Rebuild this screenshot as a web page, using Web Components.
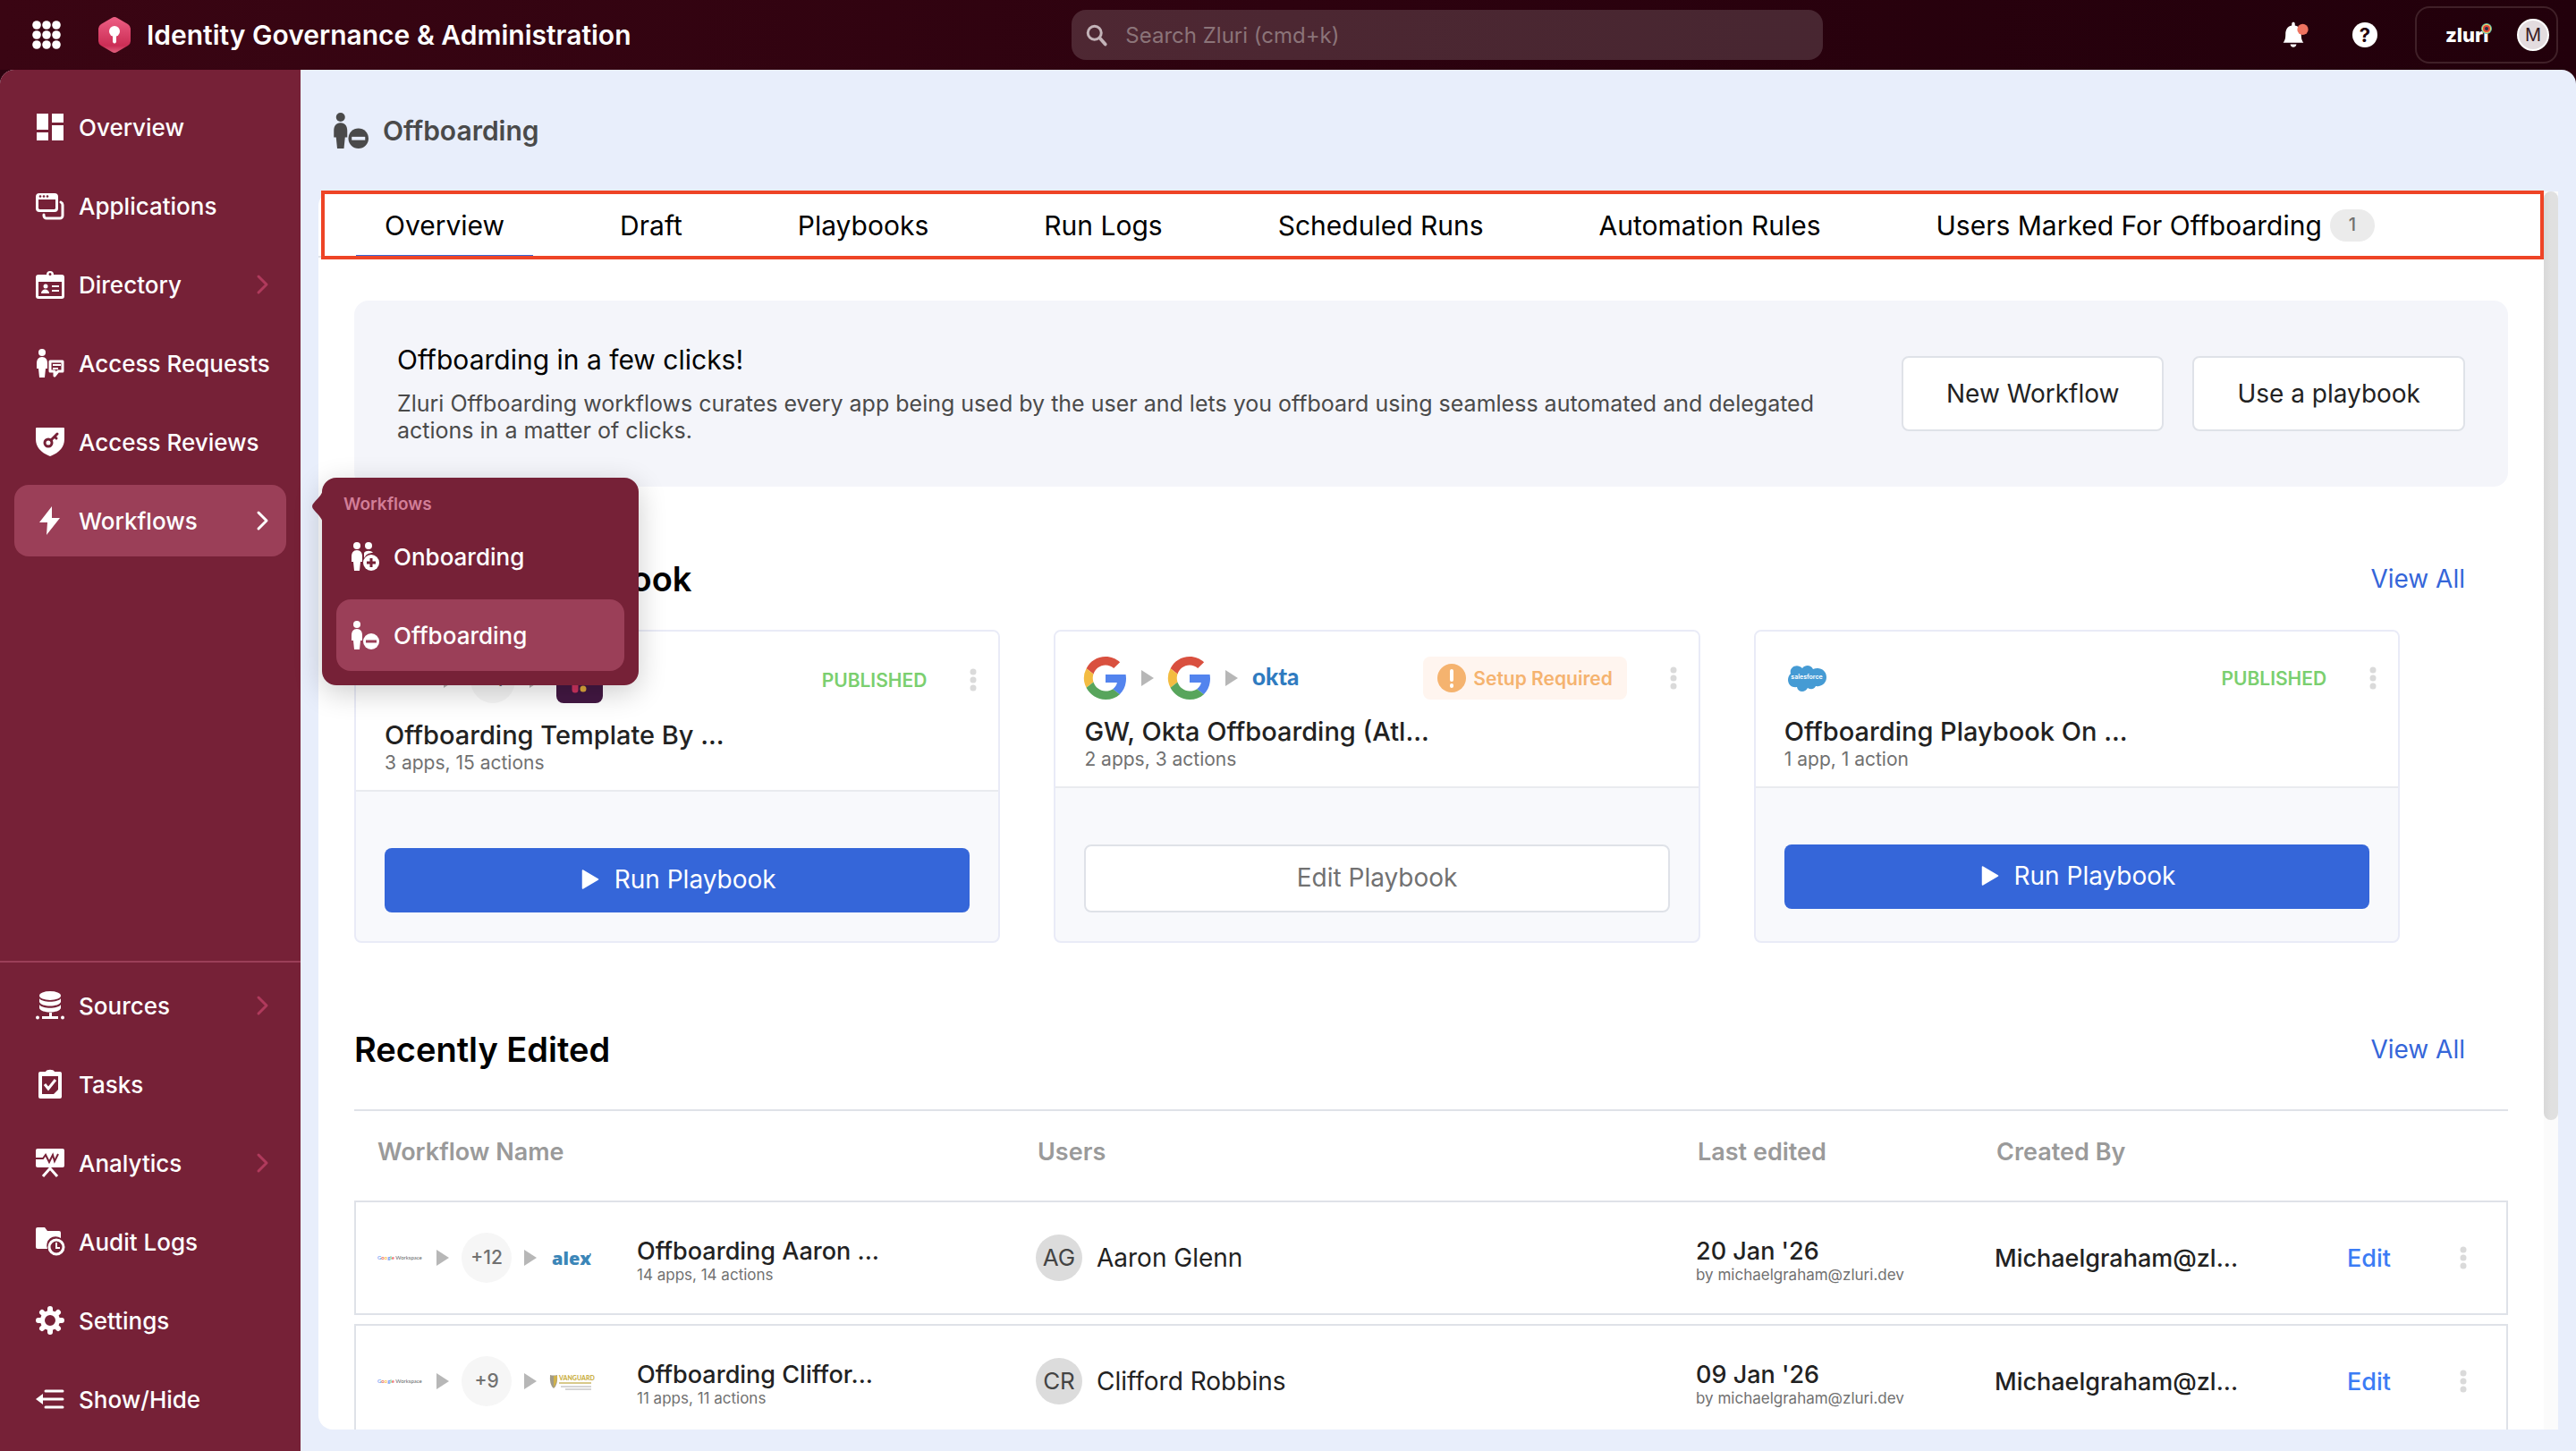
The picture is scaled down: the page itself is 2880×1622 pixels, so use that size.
<!DOCTYPE html>
<html lang="en">
<head>
<meta charset="utf-8">
<title>Offboarding</title>
<style>
	html, body {
		margin: 0;
		height: 100%;
	}
	body {
		font-family: Inter, "Noto Sans", sans-serif;
		font-size: 26px;
		color: #222;
		--wine: #762137;
		--wine-light: #9b3f58;
		--blue: #3566d9;
		--line: #dfe2e8;
		--page: #e8eefb;
	}
</style>
</head>
<body>
<app-shell>
	<app-header slot="header">Identity Governance &amp; Administration</app-header>
	<side-nav slot="nav">
		<nav-item icon="overview">Overview</nav-item>
		<nav-item icon="applications">Applications</nav-item>
		<nav-item icon="directory" more>Directory</nav-item>
		<nav-item icon="requests">Access Requests</nav-item>
		<nav-item icon="reviews">Access Reviews</nav-item>
		<nav-item icon="bolt" more active>Workflows
			<nav-flyout slot="flyout" heading="Workflows">
				<nav-item icon="onboarding" compact>Onboarding</nav-item>
				<nav-item icon="offboarding" compact active>Offboarding</nav-item>
			</nav-flyout>
		</nav-item>
		<nav-item slot="bottom" icon="sources" more>Sources</nav-item>
		<nav-item slot="bottom" icon="tasks">Tasks</nav-item>
		<nav-item slot="bottom" icon="analytics" more>Analytics</nav-item>
		<nav-item slot="bottom" icon="audit">Audit Logs</nav-item>
		<nav-item slot="bottom" icon="settings">Settings</nav-item>
		<nav-item slot="bottom" icon="collapse">Show/Hide</nav-item>
	</side-nav>

	<page-title icon="offboarding">Offboarding</page-title>
	<content-panel>
		<tab-bar slot="tabs">
			<tab-link active>Overview</tab-link>
			<tab-link>Draft</tab-link>
			<tab-link>Playbooks</tab-link>
			<tab-link>Run Logs</tab-link>
			<tab-link>Scheduled Runs</tab-link>
			<tab-link>Automation Rules</tab-link>
			<tab-link count="1">Users Marked For Offboarding</tab-link>
		</tab-bar>
		<promo-banner heading="Offboarding in a few clicks!">
			Zluri Offboarding workflows curates every app being used by the user and lets you offboard using seamless automated and delegated actions in a matter of clicks.
			<outline-button slot="actions">New Workflow</outline-button>
			<outline-button slot="actions">Use a playbook</outline-button>
		</promo-banner>
		<section-block heading="Suggested Playbook">
			<card-grid>
				<playbook-card status="PUBLISHED" heading="Offboarding Template By ..." meta="3 apps, 15 actions">
					<app-flow slot="flow" apps="none,+1,slack" large></app-flow>
				</playbook-card>
				<playbook-card status="Setup Required" heading="GW, Okta Offboarding (Atl..." meta="2 apps, 3 actions">
					<app-flow slot="flow" apps="google,google,okta"></app-flow>
				</playbook-card>
				<playbook-card status="PUBLISHED" heading="Offboarding Playbook On ..." meta="1 app, 1 action">
					<app-flow slot="flow" apps="salesforce"></app-flow>
				</playbook-card>
			</card-grid>
		</section-block>
		<section-block heading="Recently Edited" ruled>
			<workflow-table></workflow-table>
		</section-block>
	</content-panel>
</app-shell>

<script>
function define (name, html, setup) {
	const template = document.createElement('template');
	template.innerHTML = `<style>
		*, ::before, ::after { box-sizing: border-box; }
		a { color: inherit; text-decoration: none; }
		button { font: inherit; cursor: pointer; margin: 0; }
		svg { display: block; }
		:host { display: block; box-sizing: border-box; }
	</style>` + html;
	window.customElements.define(name, class extends HTMLElement {
		constructor () {
			super();
			this._shadowRoot = this.attachShadow({ mode : 'open' });
			this._shadowRoot.appendChild(template.content.cloneNode(true));
		}
		connectedCallback () {
			if (setup) setup(this, this._shadowRoot);
		}
	});
}

const person = '<circle cx="7" cy="4" r="4"/><path d="M7 9c4 0 6 3 6 7v6h-2l-1 10H4L3 22H1v-6c0-4 2-7 6-7z"/>';

// all drawn on a 32 x 32 box in currentColor
const icons = {
	overview: '<path d="M1 1h13v18H1zM18 1h13v10H18zM1 22h13v9H1zM18 14h13v17H18z"/>',
	applications: '<path d="M4 2h17a4 4 0 0 1 4 4v13a4 4 0 0 1-4 4H4a4 4 0 0 1-4-4V6a4 4 0 0 1 4-4zm-1 7v10l1 1h17l1-1V9z" fill-rule="evenodd"/><g fill="#762137"><circle cx="5" cy="5.500" r="1.300"/><circle cx="9" cy="5.500" r="1.300"/><circle cx="13" cy="5.500" r="1.300"/></g><path d="M28 12q2 1 2 3v12a3 3 0 0 1-3 3H12a3 3 0 0 1-3-3v-1" fill="none" stroke="currentColor" stroke-width="3" stroke-linecap="round"/>',
	directory: '<path d="M12 5a4 4 0 0 1 8 0h9a3 3 0 0 1 3 3v21a3 3 0 0 1-3 3H3a3 3 0 0 1-3-3V8a3 3 0 0 1 3-3zM3 13v16h26V13zM16 3a1.500 1.500 0 1 0 0 3 1.500 1.500 0 0 0 0-3z" fill-rule="evenodd"/><circle cx="11" cy="18" r="2.500"/><path d="M6 26c0-6 9-6 9 0zM18 17h8v2h-8zM18 22h8v2h-8z"/>',
	requests: person + '<path d="M16 14h14v11h-5l-4 5v-5h-5z" fill="none" stroke="currentColor" stroke-width="3" stroke-linejoin="round"/><path d="M19 17h9v2h-9zM19 21h6v2h-6z"/>',
	reviews: '<path d="M1 0h30a1 1 0 0 1 1 1v12c0 8-5 15-16 19C5 28 0 21 0 13V1a1 1 0 0 1 1-1z"/><g fill="none" stroke="#762137" stroke-width="3" stroke-linecap="round"><circle cx="14" cy="17" r="4"/><path d="M17 14l7-7M21 10l2 2"/></g>',
	bolt: '<path d="M18 0L4 18h9l-1 14 15-19h-9z"/>',
	sources: '<ellipse cx="16" cy="5" rx="12" ry="5"/><path d="M4 8c3 5 21 5 24 0v4c-2 6-22 6-24 0zM4 15c3 5 21 5 24 0v4c-2 6-22 6-24 0zM15 24h3v4h7v3H7v-3h8z"/><circle cx="2" cy="29.500" r="2"/><circle cx="30" cy="29.500" r="2"/>',
	tasks: '<path d="M5 2h6c1-3 9-3 10 0h6a2 2 0 0 1 2 2v26a2 2 0 0 1-2 2H5a2 2 0 0 1-2-2V4a2 2 0 0 1 2-2zm2 5v20h13l5-5V7z" fill-rule="evenodd"/><path d="M10 16l4 5 8-10" fill="none" stroke="currentColor" stroke-width="3"/>',
	analytics: '<path d="M2 0h28a2 2 0 0 1 2 2v17a2 2 0 0 1-2 2H2a2 2 0 0 1-2-2V2a2 2 0 0 1 2-2z"/><path d="M0 11h8l3-4 4 8 4-8 2 7 4-8" fill="none" stroke="#762137" stroke-width="2"/><path d="M8 31l8-9 8 9" fill="none" stroke="currentColor" stroke-width="3"/>',
	audit: '<path d="M2 0h8l3 4h13a2 2 0 0 1 2 2v6a10 10 0 0 0-15 12H2a2 2 0 0 1-2-2V2a2 2 0 0 1 2-2z"/><circle cx="23" cy="22" r="8" fill="none" stroke="currentColor" stroke-width="3"/><path d="M23 17v6h4" fill="none" stroke="currentColor" stroke-width="2"/>',
	settings: '<path d="M16 5a11 11 0 1 0 0 22 11 11 0 0 0 0-22zm0 5a6 6 0 1 1 0 12 6 6 0 0 1 0-12z" fill-rule="evenodd"/><g stroke="currentColor" stroke-width="6" stroke-linecap="round" fill="none"><path d="M16 3v3M16 26v3M3 16h3M26 16h3M7 7l2 2M23 23l2 2M7 25l2-2M23 9l2-2"/></g>',
	collapse: '<path d="M0 16l8-6v12z"/><path d="M6 16h24M11 7h19M11 25h19" stroke="currentColor" stroke-width="3" stroke-linecap="round"/>',
	onboarding: '<circle cx="20" cy="4" r="4"/><path d="M15 12c2-3 8-3 10 0-5 0-8 2-10 6z"/>' + person + '<circle cx="23" cy="23" r="9"/><path d="M23 18v10M18 23h10" stroke="var(--icon-cut, #762137)" stroke-width="3"/>',
	offboarding: person + '<circle cx="23" cy="23" r="9"/><path d="M17 23h12" stroke="var(--icon-cut, #762137)" stroke-width="3"/>',
	chevron: '<path d="M11 7l9 9-9 9" fill="none" stroke="currentColor" stroke-width="3" stroke-linecap="round" stroke-linejoin="round"/>',
	search: '<circle cx="13" cy="13" r="10" fill="none" stroke="currentColor" stroke-width="4"/><path d="M21 21l8 9" stroke="currentColor" stroke-width="5" stroke-linecap="round"/>',
	kebab: '<circle cx="16" cy="7" r="3.500"/><circle cx="16" cy="16" r="3.500"/><circle cx="16" cy="25" r="3.500"/>',
	play: '<path d="M5 3q0-2 2-1l22 13q2 1 0 2L7 30q-2 1-2-1z"/>',
	warning: '<circle cx="16" cy="16" r="16"/><path d="M16 8v10M16 24v1" stroke="#fff" stroke-width="4" stroke-linecap="round"/>',
	apps: '<g>' + [5, 16, 27].map(y => [5, 16, 27].map(x => `<circle cx="${x}" cy="${y}" r="4.800"/>`).join('')).join('') + '</g>',
	bell: '<path d="M14 2c0-3 4-3 4 0v2c6 1 8 6 8 11 0 6 1 8 3 11H3c2-3 3-5 3-11 0-5 2-10 8-11zM12 28h8c-1 5-7 5-8 0z"/><circle cx="28" cy="9" r="7" fill="#ee7360"/>',
};

define('app-icon', `
	<style>
		:host { width: 32px; height: 32px; flex: none; }
		svg { width: 100%; height: 100%; overflow: visible; }
	</style>
	<svg viewBox="0 0 32 32" fill="currentColor" aria-hidden="true"></svg>
`, (el, root) => {
	root.querySelector('svg').innerHTML = icons[el.getAttribute('name')];
});

define('app-shell', `
	<style>
		:host {
			display: flex;
			flex-direction: column;
			height: 100vh;
			background: #2a020e;
		}
		.body {
			flex: 1;
			min-height: 0;
			display: flex;
			border-radius: 16px 16px 0 0;
			background: var(--page);
		}
		main {
			flex: 1;
			min-width: 0;
			display: flex;
			flex-direction: column;
			padding: 0 20px 24px;
		}
	</style>
	<slot name="header"></slot>
	<div class="body">
		<slot name="nav"></slot>
		<main><slot></slot></main>
	</div>
`);

define('app-header', `
	<style>
		:host {
			display: grid;
			grid-template-columns: 58fr 840px 41fr;
			align-items: center;
			height: 78px;
			padding: 0 20px 0 36px;
			background: linear-gradient(90deg, #3a0513, #2d020f 50%, #22000b);
			color: #fff;
		}
		.left, .right { display: flex; align-items: center; }
		h1 {
			margin: 0 0 0 18px;
			font-size: 30px;
			line-height: 36px;
			font-weight: 600;
		}
		.logo { margin-left: 42px; }
		.bare { padding: 0; border: 0; background: none; color: #fff; }
		.search {
			display: flex;
			align-items: center;
			gap: 20px;
			height: 56px;
			padding: 0 16px;
			border-radius: 16px;
			background: rgba(255, 255, 255, .15);
			color: #c3b3b8;
		}
		.search app-icon { width: 24px; height: 24px; }
		input {
			flex: 1;
			padding: 0;
			border: 0;
			outline: 0;
			background: none;
			font: inherit;
			font-size: 24px;
			color: #fff;
		}
		input::placeholder { color: #8b7479; opacity: 1; }
		.right { justify-content: flex-end; gap: 52px; }
		.bell { width: 28px; height: 28px; }
		.help {
			width: 28px;
			height: 28px;
			border-radius: 50%;
			background: #fff;
			color: #22000b;
			font-size: 22px;
			line-height: 28px;
			font-weight: 700;
		}
		.account {
			display: flex;
			align-items: center;
			justify-content: space-between;
			width: 160px;
			height: 64px;
			margin-left: -10px;
			padding: 0 8px 0 32px;
			border: 2px solid #402028;
			border-radius: 16px;
		}
		.brand { position: relative; font-size: 22px; font-weight: 800; }
		.brand svg { position: absolute; top: 0; right: -3px; }
		.avatar {
			width: 36px;
			height: 36px;
			border: 2px solid #fff;
			border-radius: 50%;
			background: #e3dcdf;
			color: #3a1c25;
			font-size: 20px;
			line-height: 32px;
			text-align: center;
		}
	</style>
	<div class="left">
		<button class="bare" aria-label="All products"><app-icon name="apps"></app-icon></button>
		<svg class="logo" width="36" height="40" viewBox="0 0 36 40" aria-hidden="true">
			<defs><linearGradient id="g" x2="0" y2="1"><stop stop-color="#ee5f85"/><stop offset=".8" stop-color="#cb2d55"/><stop offset="1" stop-color="#e0607e"/></linearGradient></defs>
			<path d="M15 1q3-2 6 0l12 7q3 2 3 5v14q0 3-3 5l-12 7q-3 2-6 0L3 32q-3-2-3-5V13q0-3 3-5z" fill="url(#g)"/>
			<circle cx="18" cy="16" r="6" fill="#fff"/><path d="M16 18h4v10q-2 3-4 0z" fill="#fff"/>
		</svg>
		<h1><slot></slot></h1>
	</div>
	<label class="search">
		<app-icon name="search"></app-icon>
		<input type="text" placeholder="Search Zluri (cmd+k)" aria-label="Search Zluri">
	</label>
	<div class="right">
		<button class="bare" aria-label="Notifications"><app-icon class="bell" name="bell"></app-icon></button>
		<button class="bare help">?</button>
		<div class="account">
			<span class="brand">zluri<svg width="12" height="12" viewBox="0 0 12 12" aria-hidden="true"><circle cx="6" cy="6" r="6" fill="#5fb8a8"/><circle cx="6" cy="6" r="5" fill="#f5dc6a"/><circle cx="6" cy="6" r="4" fill="#e0483a"/><circle cx="6" cy="6" r="2" fill="#22304a"/></svg></span>
			<span class="avatar">M</span>
		</div>
	</div>
`);

define('side-nav', `
	<style>
		:host {
			display: flex;
			flex-direction: column;
			justify-content: space-between;
			width: 336px;
			flex: none;
			background: var(--wine);
			border-top-left-radius: 16px;
			color: #fff;
			z-index: 1;
		}
		div { display: grid; gap: 8px; padding: 24px 16px; }
		.bottom { border-top: 2px solid var(--wine-light); padding: 8px 16px 18px; }
	</style>
	<div><slot></slot></div>
	<div class="bottom"><slot name="bottom"></slot></div>
`);

define('nav-item', `
	<style>
		:host { position: relative; }
		:host([active]) { --icon-cut: #9b3f58; }
		a {
			display: flex;
			align-items: center;
			gap: 16px;
			height: 80px;
			padding: 0 10px 0 24px;
			border-radius: 16px;
			font-size: 26px;
			font-weight: 500;
			white-space: nowrap;
		}
		:host([active]) a { background: var(--wine-light); }
		:host([compact]) a { padding-left: 16px; }
		.label { flex: 1; }
		.chevron { display: none; color: #b03a5c; }
		:host([more]) .chevron { display: block; }
		:host([active]) .chevron { color: #fff; }
		::slotted(nav-flyout) { --icon-cut: #762137; }
	</style>
	<a href="#">
		<app-icon class="icon"></app-icon>
		<span class="label"><slot></slot></span>
		<app-icon class="chevron" name="chevron"></app-icon>
	</a>
	<slot name="flyout"></slot>
`, (el, root) => {
	const icon = document.createElement('app-icon');
	icon.className = 'icon';
	icon.setAttribute('name', el.getAttribute('icon'));
	root.querySelector('.icon').replaceWith(icon);
});

define('nav-flyout', `
	<style>
		:host {
			position: absolute;
			left: 344px;
			top: -8px;
			width: 354px;
			padding: 18px 16px 16px;
			border-radius: 16px;
			background: var(--wine);
			box-shadow: 0 8px 32px rgba(0, 0, 0, .2);
		}
		.arrow { position: absolute; left: -12px; top: 12px; }
		.heading {
			padding: 0 8px;
			font-size: 19px;
			line-height: 24px;
			font-weight: 600;
			color: #d27e98;
		}
		.items { display: grid; gap: 8px; margin-top: 6px; }
	</style>
	<svg class="arrow" width="13" height="40" viewBox="0 0 13 40" fill="#762137" aria-hidden="true"><path d="M13 0c0 6-4 9-10 16q-4 4 0 8c6 7 10 10 10 16z"/></svg>
	<div class="heading"></div>
	<div class="items"><slot></slot></div>
`, (el, root) => {
	root.querySelector('.heading').textContent = el.getAttribute('heading');
});

define('page-title', `
	<style>
		:host {
			display: flex;
			align-items: center;
			gap: 16px;
			height: 136px;
			padding-left: 16px;
			color: #4a4a4a;
			--icon-cut: var(--page);
		}
		app-icon { width: 40px; height: 40px; }
		h2 { margin: 0; font-size: 30px; line-height: 40px; font-weight: 600; }
	</style>
	<app-icon name="offboarding"></app-icon>
	<h2><slot></slot></h2>
`);

define('content-panel', `
	<style>
		:host {
			flex: 1;
			min-height: 0;
			display: grid;
			grid-template-columns: 1fr 16px;
			grid-template-rows: minmax(0, 1fr);
		}
		.view {
			display: flex;
			flex-direction: column;
			min-width: 0;
			background: #fff;
			border-radius: 16px 0 0 16px;
		}
		.content {
			flex: 1;
			min-height: 0;
			overflow: hidden;
			padding: 48px 40px 0;
		}
		.track { background: #fbfbfb; }
		.thumb {
			height: 75%;
			border-radius: 8px;
			background: linear-gradient(90deg, #d8d8d8, #e0e0e0 50%);
		}
	</style>
	<div class="view">
		<slot name="tabs"></slot>
		<div class="content"><slot></slot></div>
	</div>
	<div class="track"><div class="thumb"></div></div>
`);

define('tab-bar', `
	<style>
		:host {
			position: relative;
			height: 74px;
			border-bottom: 2px solid var(--line);
		}
		nav { display: flex; gap: 65px; height: 74px; padding-left: 42px; }
		/* callout frame lying over the tabs */
		.frame {
			position: absolute;
			inset: -1px 0 -4px 3px;
			border: 4px solid #ee4426;
			pointer-events: none;
		}
	</style>
	<nav><slot></slot></nav>
	<div class="frame"></div>
`);

define('tab-link', `
	<style>
		a {
			display: flex;
			align-items: center;
			gap: 9px;
			height: 74px;
			padding: 5px 32px 0;
			border-bottom: 3px solid transparent;
			font-size: 30px;
			color: #000;
			white-space: nowrap;
		}
		:host([active]) a { border-color: var(--blue); }
		.count {
			width: 50px;
			height: 36px;
			border-radius: 18px;
			background: #ebebeb;
			color: #717171;
			font-size: 20px;
			line-height: 34px;
			font-weight: 500;
			text-align: center;
		}
	</style>
	<a href="#"><slot></slot></a>
`, (el, root) => {
	const count = el.getAttribute('count');
	if (count && !root.querySelector('.count')) {
		const badge = document.createElement('span');
		badge.className = 'count';
		badge.textContent = count;
		root.querySelector('a').appendChild(badge);
	}
});

define('promo-banner', `
	<style>
		:host {
			display: flex;
			align-items: center;
			justify-content: space-between;
			height: 208px;
			padding: 0 48px;
			border-radius: 16px;
			background: #f4f5fa;
		}
		.text { width: 1640px; }
		h3 { margin: 0 0 16px; font-size: 30px; line-height: 36px; font-weight: 400; color: #000; }
		p { margin: 0; font-size: 25px; line-height: 30px; color: #4a4a4a; }
		.actions { display: flex; gap: 32px; }
	</style>
	<div class="text">
		<h3></h3>
		<p><slot></slot></p>
	</div>
	<div class="actions"><slot name="actions"></slot></div>
`, (el, root) => {
	root.querySelector('h3').textContent = el.getAttribute('heading');
});

define('outline-button', `
	<style>
		button {
			height: 84px;
			padding: 0 48px;
			border: 2px solid var(--line);
			border-radius: 8px;
			background: #fff;
			color: #222;
			font-size: 28px;
			white-space: nowrap;
		}
	</style>
	<button><slot></slot></button>
`);

define('section-block', `
	<style>
		header {
			display: flex;
			align-items: center;
			justify-content: space-between;
			padding: 80px 48px 34px 0;
		}
		:host([ruled]) header { padding: 96px 48px 44px 0; }
		:host([ruled]) .body { border-top: 2px solid var(--line); }
		h3 { margin: 0; font-size: 38px; line-height: 46px; font-weight: 600; color: #000; }
		a { color: var(--blue); font-size: 28px; }
	</style>
	<header><h3></h3><a href="#">View All</a></header>
	<div class="body"><slot></slot></div>
`, (el, root) => {
	root.querySelector('h3').textContent = el.getAttribute('heading');
});

define('card-grid', `
	<style>
		:host { display: grid; grid-template-columns: repeat(3, 30%); column-gap: 60px; }
	</style>
	<slot></slot>
`);

define('playbook-card', `
	<style>
		:host {
			display: flex;
			flex-direction: column;
			border: 2px solid #e9ebf7;
			border-radius: 8px;
			overflow: hidden;
			background: #f8f9fc;
		}
		.head { padding: 28px 12px 17px 32px; background: #fff; border-bottom: 2px solid #e9ebef; }
		.row { display: flex; align-items: center; }
		.status {
			margin: 0 36px 0 auto;
			color: #7bcf6f;
			font-size: 21px;
			font-weight: 600;
		}
		.status.warn {
			display: flex;
			align-items: center;
			gap: 8px;
			height: 48px;
			padding: 0 16px;
			border-radius: 8px;
			background: #fff5ef;
			color: #f5b36f;
		}
		.kebab { padding: 0; border: 0; background: none; color: #dadada; }
		h4 { margin: 18px 0 0; font-size: 29px; line-height: 36px; font-weight: 500; }
		p { margin: 0; font-size: 21px; line-height: 26px; color: #717171; }
		.foot { padding: 63px 32px 32px; }
		.foot button {
			display: flex;
			align-items: center;
			justify-content: center;
			gap: 16px;
			width: 100%;
			height: 72px;
			padding: 0 0 2px;
			border: 0;
			border-radius: 8px;
			background: var(--blue);
			color: #fff;
			font-size: 28px;
		}
		.foot button app-icon { width: 24px; height: 24px; }
		.foot button.edit { height: 76px; border: 2px solid var(--line); background: #fff; color: #717171; }
	</style>
	<div class="head">
		<div class="row">
			<slot name="flow"></slot>
			<span class="status"></span>
			<button class="kebab" aria-label="More"><app-icon name="kebab"></app-icon></button>
		</div>
		<h4></h4>
		<p></p>
	</div>
	<div class="foot"><button></button></div>
`, (el, root) => {
	const status = el.getAttribute('status');
	const published = status === 'PUBLISHED';
	const badge = root.querySelector('.status');
	badge.innerHTML = published ? status : '<app-icon name="warning"></app-icon>' + status;
	badge.classList.toggle('warn', !published);
	root.querySelector('h4').textContent = el.getAttribute('heading');
	root.querySelector('p').textContent = el.getAttribute('meta');
	const button = root.querySelector('.foot button');
	button.classList.toggle('edit', !published);
	button.innerHTML = published ? '<app-icon name="play"></app-icon>Run Playbook' : 'Edit Playbook';
});

const logos = {
	none: '<span class="blank"></span>',
	google: '<svg width="48" height="48" viewBox="0 0 48 48"><path fill="#d9503f" d="M24 9.500c3.500 0 6.700 1.200 9.200 3.600l6.900-6.900C35.900 2.400 30.500 0 24 0 14.600 0 6.500 5.400 2.600 13.200l8 6.200C12.400 13.700 17.700 9.500 24 9.500z"/><path fill="#5384ee" d="M47 24.600c0-1.600-.2-3.100-.4-4.600H24v9h12.900c-.6 3-2.300 5.500-4.800 7.200l7.700 6c4.500-4.200 7.200-10.400 7.200-17.600z"/><path fill="#f3bc42" d="M10.500 28.600a14.500 14.500 0 0 1 0-9.200l-8-6.200a24 24 0 0 0 0 21.600z"/><path fill="#58a55c" d="M24 48c6.500 0 11.900-2.100 15.900-5.800l-7.700-6c-2.200 1.500-4.900 2.300-8.200 2.300-6.300 0-11.600-4.200-13.500-9.900l-8 6.200C6.500 42.600 14.600 48 24 48z"/></svg>',
	okta: '<svg width="54" height="48" viewBox="0 0 54 48"><text x="0" y="32" font-family="Lato" font-weight="900" font-size="26" fill="#2f7bc0">okta</text></svg>',
	slack: '<svg width="52" height="52" viewBox="0 0 52 52"><rect width="52" height="52" rx="8" fill="#431843"/><g stroke-width="7" stroke-linecap="round"><path d="M21 14v8" stroke="#5fc0e0"/><path d="M30 14v8M38 22v0" stroke="#4fae82"/><path d="M21 28v9M12 26v0" stroke="#cf3460"/><path d="M30 26h9M30 36v0" stroke="#dfa93c"/></g></svg>',
	salesforce: '<svg width="48" height="32" viewBox="0 0 48 32"><path fill="#459bd4" d="M20 5c4-5 10-3 12 1 7-3 15 1 15 9 0 7-6 11-12 10-2 4-6 4-9 2-3 6-11 5-12-1-6 1-10-3-10-8 0-3 1-5 3-7C5 4 14-1 20 5z"/><text x="25" y="17" text-anchor="middle" font-family="Inter" font-weight="600" font-size="7" fill="#fff">salesforce</text></svg>',
	workspace: '<svg width="52" height="12" viewBox="0 0 52 12"><text x="0" y="8" font-family="Lato" font-size="6" fill="#666"><tspan fill="#4285f4">G</tspan><tspan fill="#ea4335">o</tspan><tspan fill="#fbbc05">o</tspan><tspan fill="#4285f4">g</tspan><tspan fill="#34a853">l</tspan><tspan fill="#ea4335">e</tspan> Workspace</text></svg>',
	alex: '<svg width="52" height="32" viewBox="0 0 52 32"><text x="3" y="24" font-family="Open Sans" font-weight="800" font-size="20" fill="#3b86b8">alex</text><circle cx="46" cy="12" r="1" fill="#3b86b8"/></svg>',
	vanguard: '<svg width="52" height="24" viewBox="0 0 52 24"><path d="M1 5q4 1 8 0 1 11-4 15-5-4-4-15z" fill="#a09a88"/><path d="M5 6h4q0 8-4 13z" fill="#d1b24a"/><text x="11" y="11" font-family="Lato" font-weight="900" font-size="7" fill="#cbb045">VANGUARD</text><path d="M11 14h36" stroke="#d8c98a" stroke-width="2"/><path d="M13 18h34M18 21h29" stroke="#aaa"/></svg>',
};

define('app-flow', `
	<style>
		:host { display: flex; align-items: center; gap: 16px; height: 48px; }
		:host([small]) { gap: 14px; height: 56px; }
		:host([large]) { height: 52px; }
		svg { overflow: visible; }
		.count {
			width: 50px;
			height: 52px;
			border-radius: 50%;
			background: #f6f6f6;
			color: #717171;
			font-size: 21px;
			line-height: 52px;
			font-weight: 500;
			text-align: center;
		}
		:host([small]) .count { width: 56px; height: 56px; line-height: 56px; }
		.blank { width: 50px; }
	</style>
`, (el, root) => {
	const arrow = '<svg width="14" height="18" viewBox="0 0 14 18" fill="#b7b7b7"><path d="M0 0l14 9-14 9z"/></svg>';
	const parts = el.getAttribute('apps').split(',').map(app => app[0] === '+' ? `<span class="count">${app}</span>` : logos[app]);
	root.innerHTML += parts.join(arrow);
});

const workflows = [
	{ apps: 'workspace,+12,alex', name: 'Offboarding Aaron ...', meta: '14 apps, 14 actions', initials: 'AG', user: 'Aaron Glenn', date: "20 Jan '26" },
	{ apps: 'workspace,+9,vanguard', name: 'Offboarding Cliffor...', meta: '11 apps, 11 actions', initials: 'CR', user: 'Clifford Robbins', date: "09 Jan '26" },
];

define('workflow-table', `
	<style>
		table {
			width: 100%;
			table-layout: fixed;
			border-collapse: separate;
			border-spacing: 0 10px;
			font-size: 27px;
			white-space: nowrap;
		}
		th {
			height: 80px;
			padding: 0 26px 10px;
			color: #9a9a9a;
			font-weight: 600;
			text-align: left;
		}
		td {
			height: 128px;
			padding: 0 24px;
			border: solid var(--line);
			border-width: 2px 0;
		}
		td:first-child { border-left-width: 2px; }
		td:last-child { border-right-width: 2px; padding: 0 20px; }
		td:nth-child(4), .name { font-weight: 500; }
		.cell { display: flex; align-items: center; gap: 16px; }
		.cell.flow { gap: 46px; }
		.cell.user { font-size: 28px; }
		.lines { padding-top: 8px; }
		.name { line-height: 30px; }
		.meta { font-size: 17px; line-height: 22px; color: #717171; }
		.avatar {
			width: 52px;
			height: 52px;
			border-radius: 50%;
			background: #dcdcdc;
			color: #444;
			font-size: 26px;
			line-height: 52px;
			text-align: center;
		}
		td a { color: #3b7cf5; font-weight: 500; }
		.kebab { display: block; padding: 0; border: 0; background: none; color: #dadada; }
	</style>
	<table>
		<colgroup>
			<col style="width:738px"><col style="width:738px"><col style="width:334px">
			<col style="width:394px"><col style="width:118px"><col style="width:86px">
		</colgroup>
		<thead>
			<tr><th>Workflow Name</th><th>Users</th><th>Last edited</th><th>Created By</th><th></th><th></th></tr>
		</thead>
		<tbody></tbody>
	</table>
`, (el, root) => {
	root.querySelector('tbody').innerHTML = workflows.map(row => `
		<tr>
			<td><div class="cell flow"><app-flow small apps="${row.apps}"></app-flow><div class="lines"><div class="name">${row.name}</div><div class="meta">${row.meta}</div></div></div></td>
			<td><div class="cell user"><span class="avatar">${row.initials}</span>${row.user}</div></td>
			<td><div class="lines"><div class="name">${row.date}</div><div class="meta">by michaelgraham@zluri.dev</div></div></td>
			<td>Michaelgraham@zl...</td>
			<td><a href="#">Edit</a></td>
			<td><button class="kebab" aria-label="More"><app-icon name="kebab"></app-icon></button></td>
		</tr>
	`).join('');
});
</script>
</body>
</html>
